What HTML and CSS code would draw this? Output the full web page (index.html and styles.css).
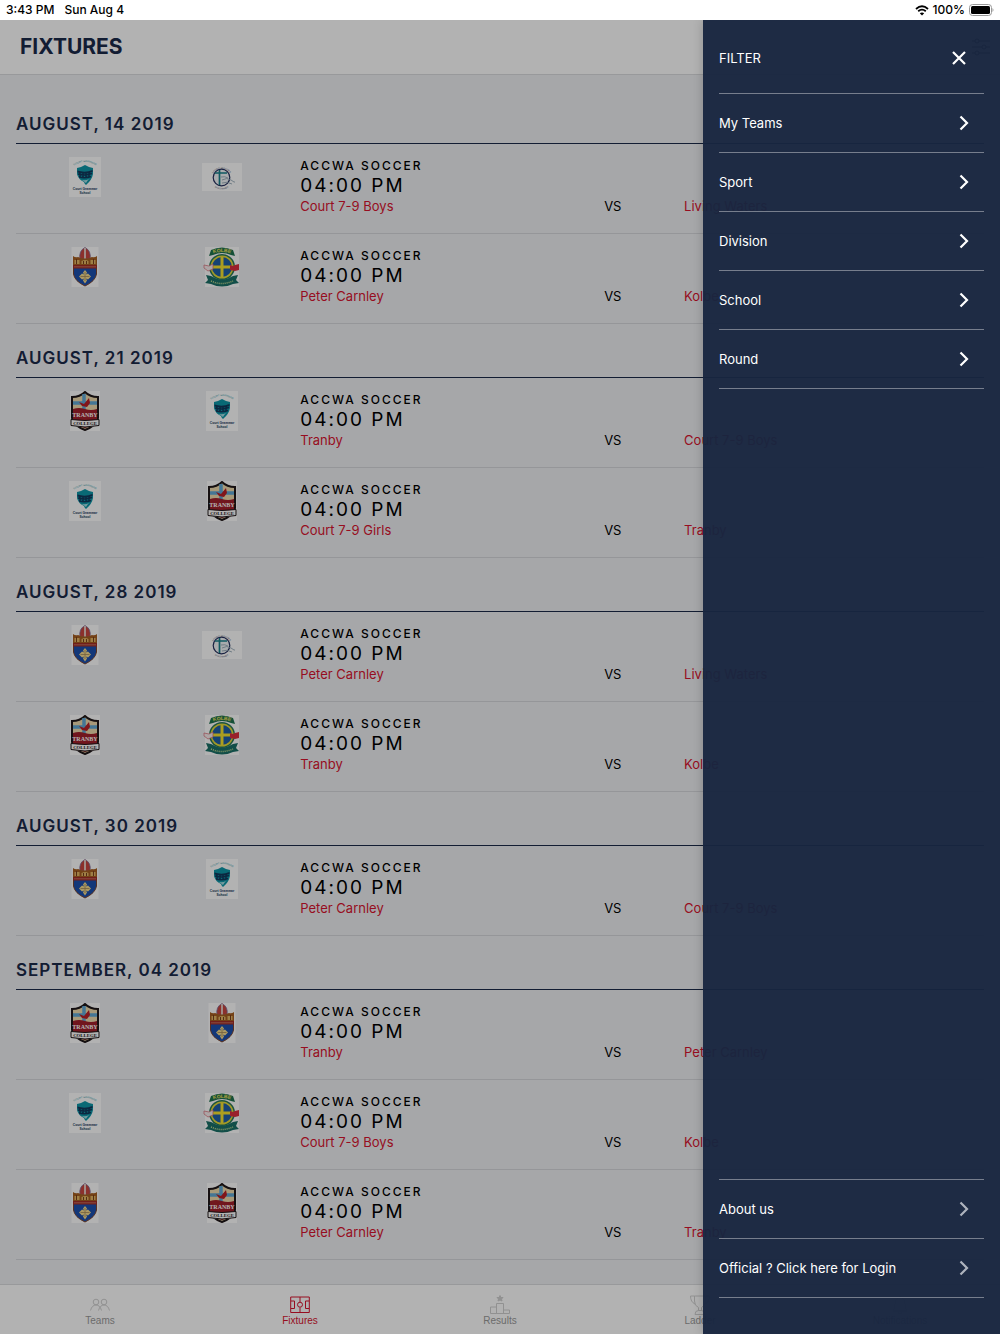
FILE: index.html
```html
<!DOCTYPE html>
<html lang="en">
<head>
  <meta charset="UTF-8">
  <meta name="viewport" content="width=device-width, initial-scale=1">
  <title>Fixtures</title>
  <link rel="stylesheet" href="styles.css">
</head>
<body>
  <!-- school logos and shared icons -->
  <svg class="sprite" aria-hidden="true">
    <symbol id="court" viewBox="0 0 32 40">
      <rect width="32" height="40" fill="#fff"/>
      <path id="court-arc" d="M3 10Q16 0 29 10" fill="none"/>
      <text class="logo-text" font-size="2.6" fill="#3d9fb0" text-anchor="middle"><textPath href="#court-arc" startOffset="50%">COURT GRAMMAR</textPath></text>
      <path d="M8 11q4-.5 8-3 4 2.500 8 3v6q-1 6-7 11-1.500-1-2-3Q9 22 8 17z" fill="#0e97a8"/>
      <path d="M8.500 13.500q7.500 2.500 15-.5v2q-7.500 3-15 .5z" fill="#12385c"/>
      <path d="M9 17q7 2 14-.5M10 20q6 1.500 12-.5M11 15v5M14 16v5M17 16v5M20 15v5" stroke="#12385c" stroke-width="1.500" fill="none"/>
      <path d="M12 23q5 1 8-1-2 2-3 4-2-2-5-3" fill="#a9dfe4"/>
      <text class="logo-text" x="16" y="33" font-size="3.300" font-weight="bold" fill="#12385c" text-anchor="middle">Court Grammar</text>
      <text class="logo-text" x="16" y="37" font-size="3.300" font-weight="bold" fill="#12385c" text-anchor="middle">School</text>
    </symbol>
    <symbol id="living" viewBox="0 0 40 28">
      <rect width="40" height="28" fill="#fff"/>
      <path id="living-top" d="M9.500 16A10 10 0 0 1 29.500 16" fill="none"/>
      <path id="living-bottom" d="M8 15A11.500 11.500 0 0 0 31 15" fill="none"/>
      <text class="logo-text" font-size="2.500" fill="#54586f" text-anchor="middle"><textPath href="#living-top" startOffset="50%">LIVING WATERS</textPath></text>
      <text class="logo-text" font-size="2.200" fill="#54586f" text-anchor="middle"><textPath href="#living-bottom" startOffset="50%">IN HIS HANDS</textPath></text>
      <circle cx="19.500" cy="14.500" r="8.300" fill="#f2f5f8" stroke="#25305e" stroke-width="1.200"/>
      <path d="M20 17q5-3 9 0t4 2M20 20q5-2 10 1M19 14q4-1 7 1" stroke="#8aa1b0" fill="none" stroke-width=".8"/>
      <path d="M17.500 7v15M13 10h12" stroke="#17808a" stroke-width="1.700"/>
    </symbol>
    <symbol id="carnley" viewBox="0 0 27 40">
      <rect width="27" height="40" fill="#fff"/>
      <path d="M2 19h23v8q-1 7-11.500 12Q3 34 2 27z" fill="#1c50ae" stroke="#7d4630"/>
      <path d="M8.500 12Q7 4 13.500.5 20 4 18.500 12z" fill="#c8463f" stroke="#7f6f9c" stroke-width=".8"/>
      <path d="M13.500 1v11" stroke="#e9ded9" stroke-width="1.700"/>
      <path d="M1.500 9q2.500 2 5 1 7 3 14 0 2.500 1 5-1v11h-24z" fill="#a75f22"/>
      <path d="M3 13h5v4H3zM10 14q4-2 7 0v3h-7zM19 13h5v4h-5z" fill="#e3b663"/>
      <path d="M5 12v5M12 14v3M15 14v3M22 12v5" stroke="#7a3f1d"/>
      <path d="M1.500 18h24v3.500h-24z" fill="#a32b27"/>
      <path d="M3 19.800h21" stroke="#e6bf9c" stroke-width=".9" stroke-dasharray="1 1"/>
      <path d="m13.500 23 2 2.500-1 2 2-1 3 3-3 3-2-1 1 2-2 3-2-3 1-2-2 1-3-3 3-3 2 1-1-2z" fill="#f6dc8d"/>
      <path d="M13.500 25v9m-4.500-4.500h9" stroke="#a58a5c" stroke-width=".8"/>
    </symbol>
    <symbol id="kolbe" viewBox="0 0 36 40">
      <path fill="#fff" d="M1 0h34v40H1z"/>
      <circle cx="18" cy="20" r="13" fill="#2a7a58"/>
      <circle cx="18" cy="20" r="11.500" fill="#e8dc38"/>
      <circle cx="18" cy="20" r="10" fill="#1f5fa6"/>
      <path d="M18 10v20M8 20h20" stroke="#f5e22e" stroke-width="3"/>
      <path d="M7 3q11-5 22 0l2 6-4-1q-9-4-18 0L5 9z" fill="#1f7350"/>
      <path id="kolbe-arc" d="M6 7.500q12-5 24 0" fill="none"/>
      <text class="logo-text" font-size="5" font-weight="bold" fill="#f8e85e" text-anchor="middle"><textPath href="#kolbe-arc" startOffset="50%">KOLBE</textPath></text>
      <path d="m0 18 5 1 4-2v5l-5 2-4-3z" fill="#f6ecec" stroke="#d96a76" stroke-width=".7"/>
      <path d="m26 18 3 1 2-1 4-1v6l-4 1-5-1z" fill="#dd2f3e"/>
      <path d="m2 28 5 1q11 7 22 0l5-1-2 5 3 3-6 1q-11 5-22 0l-6-1 3-3z" fill="#1a7068"/>
      <path d="M7 34q11 5 22 0" stroke="#c8dd92" stroke-width="1.500" stroke-dasharray="1 1" fill="none"/>
    </symbol>
    <symbol id="tranby" viewBox="0 0 30 40">
      <rect width="30" height="40" fill="#fff"/>
      <path d="M2 6q8 0 13-5 5 5 13 5v21q-2 8-13 12Q4 35 2 27z" fill="#f0dcae" stroke="#1f1719" stroke-width="2"/>
      <path d="M3 12h24M14 3v16" stroke="#62a9d6" stroke-width="3.500"/>
      <path d="m9 11 5 2 5-6 1 5-3 4-5-1z" fill="#b92026"/>
      <path d="M3 18q6-2 12 0t12 0v12q-4 4-12 7Q6 34 3 29z" fill="#a3202b"/>
      <text class="serif-text" x="15" y="26" font-size="6" font-weight="bold" fill="#fff" text-anchor="middle">TRANBY</text>
      <path d="M1 28.500q14 2 28 0v6q-14 3-28 0z" fill="#fff" stroke="#1f1719"/>
      <text class="serif-text" x="15" y="34" font-size="4.800" font-weight="bold" fill="#1f1719" text-anchor="middle">COLLEGE</text>
    </symbol>
    <symbol id="chevron" viewBox="0 0 10 16">
      <path d="m1.500 1.500 6.500 6.500-6.500 6.500" fill="none" stroke="currentColor" stroke-width="2.200"/>
    </symbol>
  </svg>

  <div class="status-bar">
    <span>3:43 PM</span>
    <span>Sun Aug 4</span>
    <span class="battery-level">
      <svg width="14" height="11" viewBox="0 0 14 11" aria-hidden="true"><path d="M1 4Q7-1.500 13 4M3.200 6.300q3.800-3.300 7.600 0" fill="none" stroke="#000" stroke-width="1.800"/><path d="M7 10.500 4.800 8.300q2.200-1.700 4.400 0z"/></svg>
      100%
      <svg width="25" height="12" viewBox="0 0 25 12" aria-hidden="true"><rect x=".5" y=".5" width="22" height="11" rx="3" fill="none" stroke="#999"/><rect x="2" y="2" width="19" height="8" rx="1.500"/><path d="M23.500 4q2 2 0 4z" fill="#999"/></svg>
    </span>
  </div>

  <div class="app">
    <header class="header">
      <h1>FIXTURES</h1>
      <button class="filter-button" aria-label="Filter">
        <svg width="18" height="18" viewBox="0 0 18 18" fill="none" stroke="currentColor"><circle cx="5" cy="3" r="2"/><circle cx="12" cy="9" r="2"/><circle cx="5" cy="15" r="2"/><path d="M0 3h3M7 3h11M0 9h10M14 9h4M0 15h3M7 15h11"/></svg>
      </button>
    </header>

    <main class="fixtures">
      <section>
        <h2>AUGUST, 14 2019</h2>
        <article class="fixture">
          <svg class="logo"><use href="#court"/></svg>
          <svg class="logo"><use href="#living"/></svg>
          <div class="match">
            <h3>ACCWA SOCCER</h3>
            <time>04:00 PM</time>
            <p class="teams"><span>Court 7-9 Boys</span><b>VS</b><span>Living Waters</span></p>
          </div>
        </article>
        <article class="fixture">
          <svg class="logo"><use href="#carnley"/></svg>
          <svg class="logo"><use href="#kolbe"/></svg>
          <div class="match">
            <h3>ACCWA SOCCER</h3>
            <time>04:00 PM</time>
            <p class="teams"><span>Peter Carnley</span><b>VS</b><span>Kolbe</span></p>
          </div>
        </article>
      </section>

      <section>
        <h2>AUGUST, 21 2019</h2>
        <article class="fixture">
          <svg class="logo"><use href="#tranby"/></svg>
          <svg class="logo"><use href="#court"/></svg>
          <div class="match">
            <h3>ACCWA SOCCER</h3>
            <time>04:00 PM</time>
            <p class="teams"><span>Tranby</span><b>VS</b><span>Court 7-9 Boys</span></p>
          </div>
        </article>
        <article class="fixture">
          <svg class="logo"><use href="#court"/></svg>
          <svg class="logo"><use href="#tranby"/></svg>
          <div class="match">
            <h3>ACCWA SOCCER</h3>
            <time>04:00 PM</time>
            <p class="teams"><span>Court 7-9 Girls</span><b>VS</b><span>Tranby</span></p>
          </div>
        </article>
      </section>

      <section>
        <h2>AUGUST, 28 2019</h2>
        <article class="fixture">
          <svg class="logo"><use href="#carnley"/></svg>
          <svg class="logo"><use href="#living"/></svg>
          <div class="match">
            <h3>ACCWA SOCCER</h3>
            <time>04:00 PM</time>
            <p class="teams"><span>Peter Carnley</span><b>VS</b><span>Living Waters</span></p>
          </div>
        </article>
        <article class="fixture">
          <svg class="logo"><use href="#tranby"/></svg>
          <svg class="logo"><use href="#kolbe"/></svg>
          <div class="match">
            <h3>ACCWA SOCCER</h3>
            <time>04:00 PM</time>
            <p class="teams"><span>Tranby</span><b>VS</b><span>Kolbe</span></p>
          </div>
        </article>
      </section>

      <section>
        <h2>AUGUST, 30 2019</h2>
        <article class="fixture">
          <svg class="logo"><use href="#carnley"/></svg>
          <svg class="logo"><use href="#court"/></svg>
          <div class="match">
            <h3>ACCWA SOCCER</h3>
            <time>04:00 PM</time>
            <p class="teams"><span>Peter Carnley</span><b>VS</b><span>Court 7-9 Boys</span></p>
          </div>
        </article>
      </section>

      <section>
        <h2>SEPTEMBER, 04 2019</h2>
        <article class="fixture">
          <svg class="logo"><use href="#tranby"/></svg>
          <svg class="logo"><use href="#carnley"/></svg>
          <div class="match">
            <h3>ACCWA SOCCER</h3>
            <time>04:00 PM</time>
            <p class="teams"><span>Tranby</span><b>VS</b><span>Peter Carnley</span></p>
          </div>
        </article>
        <article class="fixture">
          <svg class="logo"><use href="#court"/></svg>
          <svg class="logo"><use href="#kolbe"/></svg>
          <div class="match">
            <h3>ACCWA SOCCER</h3>
            <time>04:00 PM</time>
            <p class="teams"><span>Court 7-9 Boys</span><b>VS</b><span>Kolbe</span></p>
          </div>
        </article>
        <article class="fixture">
          <svg class="logo"><use href="#carnley"/></svg>
          <svg class="logo"><use href="#tranby"/></svg>
          <div class="match">
            <h3>ACCWA SOCCER</h3>
            <time>04:00 PM</time>
            <p class="teams"><span>Peter Carnley</span><b>VS</b><span>Tranby</span></p>
          </div>
        </article>
      </section>
    </main>

    <nav class="tabs">
      <a href="#teams">
        <svg viewBox="0 0 20 20"><circle cx="6" cy="7" r="2.800"/><circle cx="14" cy="7" r="2.800"/><path d="M.5 15.500Q2 10 6 10t5.500 5.500M8.500 15.500Q10 10 14 10t5.500 5.500"/></svg>
        Teams
      </a>
      <a href="#fixtures" class="active">
        <svg viewBox="0 0 20 20"><path d="M.7 2h18.600v15.500H.7zM10 2v5M10 12.500v5M1 6h3.500v7.500H1M19 6h-3.500v7.500H19"/><circle cx="10" cy="9.700" r="2.500"/></svg>
        Fixtures
      </a>
      <a href="#results">
        <svg viewBox="0 0 20 20"><path d="M6.500 18.500v-10h7v10M6.500 12h-6v6.500h19V15h-6"/><path class="solid" d="m10 .5 1 2h2l-1.500 1.500.5 2-2-1-2 1 .5-2L7 2.500h2z"/></svg>
        Results
      </a>
      <a href="#ladder">
        <svg viewBox="0 0 20 20"><path d="M4.500 1h11v5q0 5-4 6.500v3h-3v-3q-4-1.500-4-6.500zM4.500 1h-4q0 6 4.500 8M15.500 1h4q0 6-4.500 8M5 19.500q0-4 3.500-4h3q3.500 0 3.500 4z"/></svg>
        Ladder
      </a>
      <a href="#notifications">
        <svg viewBox="0 0 20 20"><path d="M3 16q2-2 2-7 0-6 5-6.500Q15 3 15 9q0 5 2 7zM8 16q0 3 2 3t2-3M10 2.500V1"/></svg>
        Notifications
      </a>
    </nav>
  </div>

  <div class="backdrop">
    <aside class="drawer">
      <header class="drawer-header">
        <h2>FILTER</h2>
        <button aria-label="Close">
          <svg width="14" height="14" viewBox="0 0 14 14"><path d="m1 1 12 12M13 1 1 13" stroke="currentColor" stroke-width="2.200"/></svg>
        </button>
      </header>
      <nav class="menu">
        <button>My Teams <svg><use href="#chevron"/></svg></button>
        <button>Sport <svg><use href="#chevron"/></svg></button>
        <button>Division <svg><use href="#chevron"/></svg></button>
        <button>School <svg><use href="#chevron"/></svg></button>
        <button>Round <svg><use href="#chevron"/></svg></button>
      </nav>
      <nav class="menu menu-bottom">
        <a href="#about">About us <svg><use href="#chevron"/></svg></a>
        <a href="#login">Official ? Click here for Login <svg><use href="#chevron"/></svg></a>
      </nav>
    </aside>
  </div>
</body>
</html>
```
FILE: styles.css
```css
* {
  box-sizing: border-box;
}

body {
  margin: 0;
  height: 100vh;
  display: flex;
  flex-direction: column;
  font-family: Inter, "Liberation Sans", sans-serif;
  font-size: 13px;
  line-height: 20px;
  color: #000;
  background: #fff;
  position: relative;
}

h1, h2, h3, p {
  margin: 0;
}

button {
  padding: 0;
  border: none;
  background: none;
  font: inherit;
  color: inherit;
  cursor: pointer;
}

a {
  color: inherit;
  text-decoration: none;
}

svg {
  display: block;
}

.sprite {
  display: none;
}

.logo-text {
  font-family: "Liberation Sans", sans-serif;
}

.serif-text {
  font-family: "Liberation Serif", serif;
}

/* status bar */
.status-bar {
  flex: none;
  display: flex;
  align-items: center;
  gap: 10px;
  height: 20px;
  padding: 0 6px;
  font-size: 12px;
  font-weight: 500;
}

.battery-level {
  display: flex;
  align-items: center;
  gap: 4px;
  margin-left: auto;
}

/* page */
.app {
  flex: 1;
  min-height: 0;
  display: flex;
  flex-direction: column;
  background: #eeeff3;
}

.header {
  flex: none;
  display: flex;
  align-items: center;
  justify-content: space-between;
  height: 55px;
  padding: 0 10px 0 20px;
  background: #fff;
  border-bottom: 1px solid #dadbde;
  color: #1b2a4a;
}

.header h1 {
  font-size: 21px;
  font-weight: 700;
}

.fixtures {
  flex: 1;
  min-height: 0;
  overflow: hidden;
  padding: 15px 16px 0;
}

.fixtures h2 {
  height: 54px;
  padding-top: 24px;
  border-bottom: 1px solid #1b2a4a;
  color: #1b2a4a;
  font-size: 17px;
  font-weight: 600;
  letter-spacing: 1px;
}

.fixture {
  display: grid;
  grid-template-columns: 17fr 17fr 86fr;
  height: 90px;
  padding-top: 12px;
  border-bottom: 1px solid #d6d7dc;
}

.logo {
  width: 40px;
  height: 40px;
  margin: 1px auto 0;
}

.match {
  padding-left: 10px;
}

.match h3 {
  font-size: 12px;
  font-weight: 500;
  line-height: 20px;
  letter-spacing: 2px;
}

.match time {
  display: block;
  font-size: 19px;
  font-weight: 400;
  letter-spacing: 2px;
}

.teams {
  display: grid;
  grid-template-columns: 304fr 80fr 300fr;
  color: #d8142f;
}

.teams b {
  color: #000;
  font-weight: 400;
}

/* bottom tabs */
.tabs {
  flex: none;
  display: flex;
  height: 50px;
  background: #fff;
  border-top: 1px solid #dadbde;
  font-family: "Liberation Sans", Arial, sans-serif;
  font-size: 10px;
  line-height: 12px;
  color: #9a9a9a;
}

.tabs a {
  flex: 1;
  display: flex;
  flex-direction: column;
  align-items: center;
  padding-top: 10px;
}

.tabs svg {
  width: 20px;
  height: 20px;
  fill: none;
  stroke: #d0d0d0;
}

.tabs .solid {
  fill: #d0d0d0;
}

.tabs .active {
  color: #d8142f;
}

.tabs .active svg {
  stroke: #d8142f;
}

/* filter drawer */
.backdrop {
  position: absolute;
  top: 20px;
  right: 0;
  bottom: 0;
  left: 0;
  display: flex;
  justify-content: flex-end;
  background: rgba(0, 0, 0, 0.3);
  overflow: hidden;
}

.drawer {
  display: flex;
  flex-direction: column;
  width: 297px;
  padding: 0 16px 36px;
  background: rgba(24, 37, 63, 0.96);
  box-shadow: 0 0 10px rgba(0, 0, 0, 0.2);
  color: #fff;
}

.drawer-header {
  display: flex;
  align-items: center;
  justify-content: space-between;
  height: 74px;
  padding-top: 2px;
  padding-right: 18px;
  border-bottom: 1px solid #777e8d;
}

.drawer-header h2 {
  font-size: 13px;
  font-weight: 400;
}

.menu button,
.menu a {
  display: flex;
  align-items: center;
  justify-content: space-between;
  width: 100%;
  height: 59px;
  padding-right: 15px;
  border-bottom: 1px solid #777e8d;
}

.menu svg {
  width: 10px;
  height: 16px;
}

.menu-bottom {
  margin-top: auto;
  border-top: 1px solid #777e8d;
}

.menu-bottom svg {
  color: #aeb3bd;
}
```
